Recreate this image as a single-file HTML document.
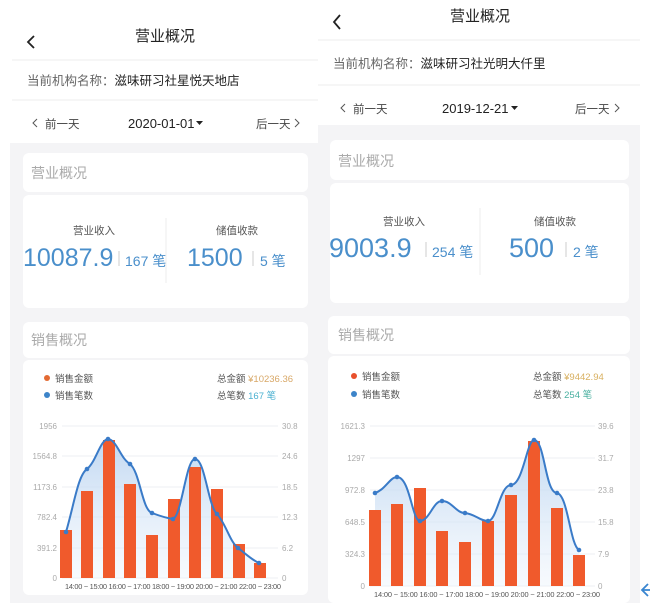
<!DOCTYPE html>
<html><head><meta charset="utf-8"><style>
html,body{margin:0;padding:0;background:#fff;}
svg{display:block;font-family:"Liberation Sans","Noto Sans CJK SC",sans-serif;}
</style></head><body>
<svg width="650" height="603" viewBox="0 0 650 603" xmlns="http://www.w3.org/2000/svg">
<defs>
<linearGradient id="ga" x1="0" y1="0" x2="0" y2="1"><stop offset="0" stop-color="#b9d3f0" stop-opacity="0.9"/><stop offset="1" stop-color="#eaf2fb" stop-opacity="0.4"/></linearGradient>
</defs>
<rect width="650" height="603" fill="#fff"/>
<!-- LEFT PANEL -->
<rect x="10" y="143" width="308" height="460" fill="#f4f4f6"/>
<path d="M34 36 L28 42 L34 48" stroke="#222" stroke-width="1.8" fill="none"/>
<text x="165" y="41" font-size="15" text-anchor="middle" fill="#222">营业概况</text>
<line x1="12" y1="60" x2="318" y2="60" stroke="#eee"/>
<text x="27" y="85" font-size="12.5" fill="#666">当前机构名称：<tspan fill="#222">滋味研习社星悦天地店</tspan></text>
<line x1="12" y1="100" x2="318" y2="100" stroke="#eee"/>
<path d="M37 119 L33 123 L37 127" stroke="#555" fill="none"/>
<text x="45" y="128" font-size="11.5" fill="#444">前一天</text>
<text x="128" y="128" font-size="13" fill="#222">2020-01-01</text>
<path d="M196 121 L203 121 L199.5 125Z" fill="#222"/>
<text x="256" y="128" font-size="11.5" fill="#444">后一天</text>
<path d="M295 119 L299 123 L295 127" stroke="#555" fill="none"/>
<rect x="23" y="153" width="285" height="39" rx="6" fill="#fff"/>
<text x="31" y="178" font-size="14" fill="#aaa">营业概况</text>
<rect x="23" y="195" width="285" height="113" rx="6" fill="#fff"/>
<text x="94" y="234" font-size="10.5" text-anchor="middle" fill="#555">营业收入</text>
<text x="237" y="234" font-size="10.5" text-anchor="middle" fill="#555">储值收款</text>
<text x="23" y="266" font-size="25" fill="#4a8fcb">10087.9</text>
<line x1="119" y1="251" x2="119" y2="266" stroke="#ccc"/>
<text x="125" y="266" font-size="14" fill="#4a8fcb">167 笔</text>
<line x1="166" y1="218" x2="166" y2="283" stroke="#eee"/>
<text x="187" y="266" font-size="25" fill="#4a8fcb">1500</text>
<line x1="253" y1="251" x2="253" y2="266" stroke="#ccc"/>
<text x="260" y="266" font-size="14" fill="#4a8fcb">5 笔</text>
<rect x="23" y="322" width="285" height="36" rx="6" fill="#fff"/>
<text x="31" y="345" font-size="14" fill="#aaa">销售概况</text>
<rect x="23" y="360" width="285" height="235" rx="6" fill="#fff"/>
<circle cx="47" cy="378" r="3" fill="#e36a33"/><text x="55" y="382" font-size="9.5" fill="#555">销售金额</text>
<circle cx="47" cy="395" r="3" fill="#3d84c9"/><text x="55" y="399" font-size="9.5" fill="#555">销售笔数</text>
<text x="217" y="382" font-size="9.5" fill="#555">总金额 <tspan fill="#d8a868">¥10236.36</tspan></text>
<text x="217" y="399" font-size="9.5" fill="#555">总笔数 <tspan fill="#4ab0d0">167 笔</tspan></text>
<g stroke="#eceff3" stroke-width="1">
<line x1="62" y1="426" x2="278" y2="426"/><line x1="62" y1="456" x2="278" y2="456"/><line x1="62" y1="487" x2="278" y2="487"/><line x1="62" y1="517" x2="278" y2="517"/><line x1="62" y1="548" x2="278" y2="548"/><line x1="62" y1="578" x2="278" y2="578"/>
</g>
<g font-size="8" fill="#aaa" text-anchor="end">
<text x="57" y="429">1956</text><text x="57" y="459">1564.8</text><text x="57" y="490">1173.6</text><text x="57" y="520">782.4</text><text x="57" y="551">391.2</text><text x="57" y="581">0</text>
</g>
<g font-size="8" fill="#aaa">
<text x="282" y="429">30.8</text><text x="282" y="459">24.6</text><text x="282" y="490">18.5</text><text x="282" y="520">12.3</text><text x="282" y="551">6.2</text><text x="282" y="581">0</text>
</g>
<path d="M66 532 C74 505 78 475 87 469 C96 462 100 440 108 439 C117 440 120 458 130 464 C140 472 142 510 152 513 C160 516 166 518 173 519 C182 515 186 459 195 459 C205 459 208 506 217 514 C226 524 230 542 238 548 C246 554 252 560 259 563 L259 578 L66 578Z" fill="url(#ga)"/>
<g fill="#f05a2c">
<rect x="60" y="530" width="12" height="48"/><rect x="81" y="491" width="12" height="87"/><rect x="103" y="440" width="12" height="138"/><rect x="124" y="484" width="12" height="94"/><rect x="146" y="535" width="12" height="43"/><rect x="168" y="499" width="12" height="79"/><rect x="189" y="467" width="12" height="111"/><rect x="211" y="489" width="12" height="89"/><rect x="233" y="544" width="12" height="34"/><rect x="254" y="563" width="12" height="15"/>
</g>
<path d="M66 532 C74 505 78 475 87 469 C96 462 100 440 108 439 C117 440 120 458 130 464 C140 472 142 510 152 513 C160 516 166 518 173 519 C182 515 186 459 195 459 C205 459 208 506 217 514 C226 524 230 542 238 548 C246 554 252 560 259 563" fill="none" stroke="#3a7bc8" stroke-width="2"/>
<g fill="#3a7bc8"><circle cx="66" cy="532" r="2.3"/><circle cx="87" cy="469" r="2.3"/><circle cx="108" cy="439" r="2.3"/><circle cx="130" cy="464" r="2.3"/><circle cx="152" cy="513" r="2.3"/><circle cx="173" cy="519" r="2.3"/><circle cx="195" cy="459" r="2.3"/><circle cx="217" cy="514" r="2.3"/><circle cx="238" cy="548" r="2.3"/><circle cx="259" cy="563" r="2.3"/></g>
<text x="65" y="589" font-size="7.4" fill="#555" textLength="216">14:00 ~ 15:00 16:00 ~ 17:00 18:00 ~ 19:00 20:00 ~ 21:00 22:00 ~ 23:00</text>

<!-- RIGHT PANEL -->
<rect x="318" y="0" width="332" height="603" fill="#fff"/>
<rect x="318" y="125" width="322" height="478" fill="#f4f4f6"/>
<path d="M340 15 L334 22 L340 29" stroke="#222" stroke-width="1.8" fill="none"/>
<text x="480" y="21" font-size="15" text-anchor="middle" fill="#222">营业概况</text>
<line x1="318" y1="40" x2="640" y2="40" stroke="#eee"/>
<text x="333" y="68" font-size="12.5" fill="#666">当前机构名称：<tspan fill="#222">滋味研习社光明大仟里</tspan></text>
<line x1="318" y1="85" x2="640" y2="85" stroke="#eee"/>
<path d="M345 104 L341 108 L345 112" stroke="#555" fill="none"/>
<text x="353" y="113" font-size="11.5" fill="#444">前一天</text>
<text x="442" y="113" font-size="13" fill="#222">2019-12-21</text>
<path d="M511 106 L518 106 L514.5 110Z" fill="#222"/>
<text x="575" y="113" font-size="11.5" fill="#444">后一天</text>
<path d="M615 104 L619 108 L615 112" stroke="#555" fill="none"/>
<rect x="330" y="140" width="299" height="40" rx="6" fill="#fff"/>
<text x="338" y="166" font-size="14" fill="#aaa">营业概况</text>
<rect x="330" y="183" width="299" height="120" rx="6" fill="#fff"/>
<text x="404" y="225" font-size="10.5" text-anchor="middle" fill="#555">营业收入</text>
<text x="555" y="225" font-size="10.5" text-anchor="middle" fill="#555">储值收款</text>
<text x="329" y="257" font-size="27" fill="#4a8fcb">9003.9</text>
<line x1="426" y1="242" x2="426" y2="257" stroke="#ccc"/>
<text x="432" y="257" font-size="14" fill="#4a8fcb">254 笔</text>
<line x1="480" y1="208" x2="480" y2="275" stroke="#eee"/>
<text x="509" y="257" font-size="27" fill="#4a8fcb">500</text>
<line x1="566" y1="242" x2="566" y2="257" stroke="#ccc"/>
<text x="573" y="257" font-size="14" fill="#4a8fcb">2 笔</text>
<rect x="328" y="316" width="302" height="38" rx="6" fill="#fff"/>
<text x="338" y="340" font-size="14" fill="#aaa">销售概况</text>
<rect x="328" y="356" width="302" height="247" rx="6" fill="#fff"/>
<circle cx="354" cy="376" r="3" fill="#e8502c"/><text x="362" y="380" font-size="9.5" fill="#555">销售金额</text>
<circle cx="354" cy="394" r="3" fill="#3d84c9"/><text x="362" y="398" font-size="9.5" fill="#555">销售笔数</text>
<text x="533" y="380" font-size="9.5" fill="#555">总金额 <tspan fill="#d8b060">¥9442.94</tspan></text>
<text x="533" y="398" font-size="9.5" fill="#555">总笔数 <tspan fill="#4ab0a0">254 笔</tspan></text>
<g stroke="#eceff3" stroke-width="1">
<line x1="370" y1="426" x2="595" y2="426"/><line x1="370" y1="458" x2="595" y2="458"/><line x1="370" y1="490" x2="595" y2="490"/><line x1="370" y1="522" x2="595" y2="522"/><line x1="370" y1="554" x2="595" y2="554"/><line x1="370" y1="586" x2="595" y2="586"/>
</g>
<g font-size="8" fill="#aaa" text-anchor="end">
<text x="365" y="429">1621.3</text><text x="365" y="461">1297</text><text x="365" y="493">972.8</text><text x="365" y="525">648.5</text><text x="365" y="557">324.3</text><text x="365" y="589">0</text>
</g>
<g font-size="8" fill="#aaa">
<text x="598" y="429">39.6</text><text x="598" y="461">31.7</text><text x="598" y="493">23.8</text><text x="598" y="525">15.8</text><text x="598" y="557">7.9</text><text x="598" y="589">0</text>
</g>
<path d="M375 493 C385 490 390 477 397 477 C410 477 412 521 420 521 C430 520 433 501 442 501 C452 501 456 513 465 513 C475 514 480 521 488 521 C497 521 500 485 511 485 C523 485 527 440 534 440 C545 440 545 493 557 493 C568 495 570 545 579 550 L579 586 L375 586Z" fill="url(#ga)"/>
<g fill="#f05a2c">
<rect x="369" y="510" width="12" height="76"/><rect x="391" y="504" width="12" height="82"/><rect x="414" y="488" width="12" height="98"/><rect x="436" y="531" width="12" height="55"/><rect x="459" y="542" width="12" height="44"/><rect x="482" y="521" width="12" height="65"/><rect x="505" y="495" width="12" height="91"/><rect x="528" y="441" width="12" height="145"/><rect x="551" y="508" width="12" height="78"/><rect x="573" y="555" width="12" height="31"/>
</g>
<path d="M375 493 C385 490 390 477 397 477 C410 477 412 521 420 521 C430 520 433 501 442 501 C452 501 456 513 465 513 C475 514 480 521 488 521 C497 521 500 485 511 485 C523 485 527 440 534 440 C545 440 545 493 557 493 C568 495 570 545 579 550" fill="none" stroke="#3a7bc8" stroke-width="2"/>
<g fill="#3a7bc8"><circle cx="375" cy="493" r="2.3"/><circle cx="397" cy="477" r="2.3"/><circle cx="420" cy="521" r="2.3"/><circle cx="442" cy="501" r="2.3"/><circle cx="465" cy="513" r="2.3"/><circle cx="488" cy="521" r="2.3"/><circle cx="511" cy="485" r="2.3"/><circle cx="534" cy="440" r="2.3"/><circle cx="557" cy="493" r="2.3"/><circle cx="579" cy="550" r="2.3"/></g>
<text x="374" y="597" font-size="7.4" fill="#555" textLength="226">14:00 ~ 15:00 16:00 ~ 17:00 18:00 ~ 19:00 20:00 ~ 21:00 22:00 ~ 23:00</text>
<path d="M648 584 L642 590 L648 596 M642 590 L650 590" stroke="#3a86d0" stroke-width="1.8" fill="none"/>
</svg>
</body></html>
